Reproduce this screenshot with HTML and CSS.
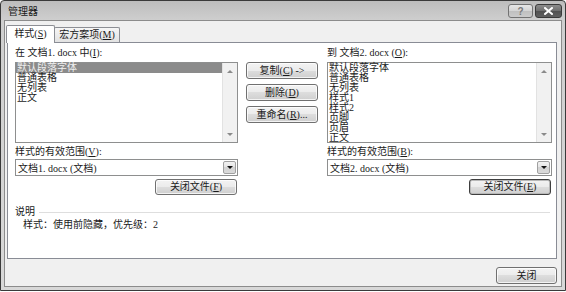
FILE: index.html
```html
<!DOCTYPE html>
<html lang="zh-CN">
<head>
    <meta charset="UTF-8">
    <title>管理器</title>
    <link rel="stylesheet" href="styles.css">
</head>
<body>
    <div class="window">
        <div class="titlebar">
            <span class="title">管理器</span>
            <div class="caption-btns">
                <span class="cap-btn help">?</span>
                <span class="cap-btn close">
                    <svg width="9" height="8" viewBox="0 0 9 8"><path d="M1 1 L8 7 M8 1 L1 7" stroke="#fff" stroke-width="2" stroke-linecap="square"/></svg>
                </span>
            </div>
        </div>

        <div class="client">
            <div class="tabs">
                <div class="tab active">样式(<u>S</u>)</div>
                <div class="tab">宏方案项(<u>M</u>)</div>
            </div>

            <div class="panel">
                <div class="grid">
                    <div class="lbl">在 文档1. docx 中(<u>I</u>):</div>
                    <div></div>
                    <div class="lbl">到 文档2. docx (<u>O</u>):</div>

                    <div class="listbox">
                        <ul class="items">
                            <li class="sel">默认段落字体</li>
                            <li>普通表格</li>
                            <li>无列表</li>
                            <li>正文</li>
                        </ul>
                        <div class="vscroll"><span class="arr up"></span><span class="arr down"></span></div>
                    </div>

                    <div class="actions">
                        <button class="btn">复制(<u>C</u>) -&gt;</button>
                        <button class="btn">删除(<u>D</u>)</button>
                        <button class="btn">重命名(<u>R</u>)...</button>
                    </div>

                    <div class="listbox">
                        <ul class="items">
                            <li>默认段落字体</li>
                            <li>普通表格</li>
                            <li>无列表</li>
                            <li>样式1</li>
                            <li>样式2</li>
                            <li>页脚</li>
                            <li>页眉</li>
                            <li>正文</li>
                        </ul>
                        <div class="vscroll"><span class="arr up"></span><span class="arr down"></span></div>
                    </div>

                    <div class="scope">
                        <div class="lbl-s">样式的有效范围(<u>V</u>):</div>
                        <div class="combo">
                            <span class="combo-text">文档1. docx (文档)</span>
                            <span class="drop"><span class="arr down dark"></span></span>
                        </div>
                        <button class="btn wide">关闭文件(<u>F</u>)</button>
                    </div>
                    <div></div>
                    <div class="scope">
                        <div class="lbl-s">样式的有效范围(<u>B</u>):</div>
                        <div class="combo">
                            <span class="combo-text">文档2. docx (文档)</span>
                            <span class="drop"><span class="arr down dark"></span></span>
                        </div>
                        <button class="btn wide focus">关闭文件(<u>E</u>)</button>
                    </div>
                </div>

                <div class="desc">
                    <div class="desc-head">说明</div>
                    <div class="desc-text">样式：使用前隐藏，优先级：2</div>
                </div>
            </div>

            <div class="footer">
                <button class="btn close-btn">关闭</button>
            </div>
        </div>
    </div>
</body>
</html>
```

FILE: styles.css
```css
* {
    box-sizing: border-box;
}
body {
    margin: 0;
    background: #fff;
    font-family: "Liberation Serif", "Noto Sans CJK SC", serif;
    font-size: 10px;
    color: #1a1a1a;
}
u {
    text-underline-offset: 1px;
}

/* window frame */
.window {
    width: 566px;
    height: 291px;
    border: 1px solid #3a3a3a;
    border-radius: 4px 4px 0 0;
    background: linear-gradient(#bdbdbd, #cfcfcf 20px, #d8d8d8);
    padding: 0 3px 3px;
    display: flex;
    flex-direction: column;
}
.titlebar {
    height: 19px;
    display: flex;
    justify-content: space-between;
    align-items: flex-start;
    padding-left: 4px;
}
.title {
    padding-top: 5px;
    line-height: 12px;
}
.caption-btns {
    display: flex;
    gap: 2px;
    margin-top: 3px;
}
.cap-btn {
    height: 14px;
    border: 1px solid #727272;
    border-radius: 3px;
    display: flex;
    align-items: center;
    justify-content: center;
}
.cap-btn.help {
    width: 25px;
    background: linear-gradient(#e6e6e6, #d4d4d4 50%, #bfbfbf 50%, #cbcbcb);
    color: #7a7a7a;
    font-family: "Liberation Sans", sans-serif;
    font-weight: bold;
    font-size: 10px;
}
.cap-btn.close {
    width: 27px;
    border-color: #3a3a3a;
    background: linear-gradient(#8c8c8c, #6e6e6e 50%, #505050 50%, #606060);
}

/* client area */
.client {
    flex: 1;
    border: 1px solid #8c8c8c;
    background: #f0f0f0;
    padding: 4px 0 0 2px;
}
.tabs {
    display: flex;
    align-items: flex-end;
    height: 17px;
    position: relative;
    z-index: 1;
}
.tab {
    height: 15px;
    line-height: 13px;
    border: 1px solid #8c8e94;
    border-bottom: none;
    border-radius: 2px 2px 0 0;
    background: linear-gradient(#f6f6f6, #e2e2e2);
    text-align: center;
}
.tab:first-child {
    width: 49px;
    margin-left: -1px;
}
.tab + .tab {
    width: 66px;
    margin-left: -1px;
}
.tab.active {
    height: 18px;
    margin-bottom: -1px;
    line-height: 15px;
    background: #fff;
    position: relative;
    z-index: 2;
}

.panel {
    width: 550px;
    height: 217px;
    border: 1px solid #898c95;
    background: #fff;
    padding: 4px 4px 0 7px;
}
.grid {
    display: grid;
    grid-template-columns: 223px 89px 225px;
}
.lbl {
    line-height: 12px;
    padding-bottom: 3px;
    white-space: nowrap;
}

/* list boxes */
.listbox {
    height: 81px;
    border: 1px solid #8e8f8f;
    display: flex;
    background: #fff;
}
.items {
    flex: 1;
    margin: 0;
    padding: 0;
    list-style: none;
}
.items li {
    height: 10px;
    line-height: 10px;
    padding-left: 1px;
    white-space: nowrap;
}
.items li.sel {
    background: #8b8b8b;
    color: #f0f0f0;
}
.vscroll {
    width: 15px;
    background: #f1f1f1;
    border-left: 1px solid #e2e2e2;
    display: flex;
    flex-direction: column;
    justify-content: space-between;
    align-items: center;
    padding: 7px 0 6px;
}
.arr {
    width: 0;
    height: 0;
    border-left: 3px solid transparent;
    border-right: 3px solid transparent;
}
.arr.up {
    border-bottom: 3px solid #8a8a8a;
}
.arr.down {
    border-top: 3px solid #8a8a8a;
}
.arr.down.dark {
    border-top-color: #111;
}

/* push buttons */
.actions {
    padding-left: 8px;
    display: flex;
    flex-direction: column;
    gap: 5px;
}
.btn {
    font: inherit;
    color: #1a1a1a;
    width: 72px;
    height: 17px;
    padding: 0;
    border: 1px solid #707070;
    border-radius: 3px;
    background: linear-gradient(#f3f3f3, #ebebeb 50%, #dddddd 50%, #cfcfcf);
    box-shadow: inset 0 0 0 1px rgba(255, 255, 255, 0.75);
    line-height: 14px;
}
.btn.wide {
    width: 82px;
    height: 16px;
}
.btn.focus {
    border-color: #3e3e3e;
    box-shadow: inset 0 0 0 1px #b8b8b8;
}

/* scope combos */
.scope {
    display: flex;
    flex-direction: column;
    padding-top: 3px;
}
.lbl-s {
    line-height: 12px;
    white-space: nowrap;
}
.combo {
    margin-top: 1px;
    height: 17px;
    border: 1px solid #8e8f8f;
    background: #fff;
    display: flex;
    align-items: center;
    justify-content: space-between;
    padding-left: 2px;
}
.drop {
    width: 13px;
    height: 13px;
    margin-right: 1px;
    border: 1px solid #a0a0a0;
    border-radius: 2px;
    background: linear-gradient(#f2f2f2, #e4e4e4 50%, #d2d2d2 50%, #dadada);
    display: flex;
    align-items: center;
    justify-content: center;
}
.scope .btn {
    margin-top: 3px;
    align-self: flex-end;
    margin-right: 1px;
}

/* description */
.desc {
    margin-top: 11px;
    padding-right: 2px;
}
.desc-head {
    display: flex;
    align-items: center;
    gap: 4px;
    line-height: 12px;
}
.desc-head::after {
    content: "";
    flex: 1;
    height: 1px;
    background: #dedede;
}
.desc-text {
    margin-top: 1px;
    padding-left: 8px;
    line-height: 12px;
}

.footer {
    display: flex;
    justify-content: flex-end;
    padding: 8px 4px 0 0;
}
.btn.close-btn {
    width: 61px;
}
```
